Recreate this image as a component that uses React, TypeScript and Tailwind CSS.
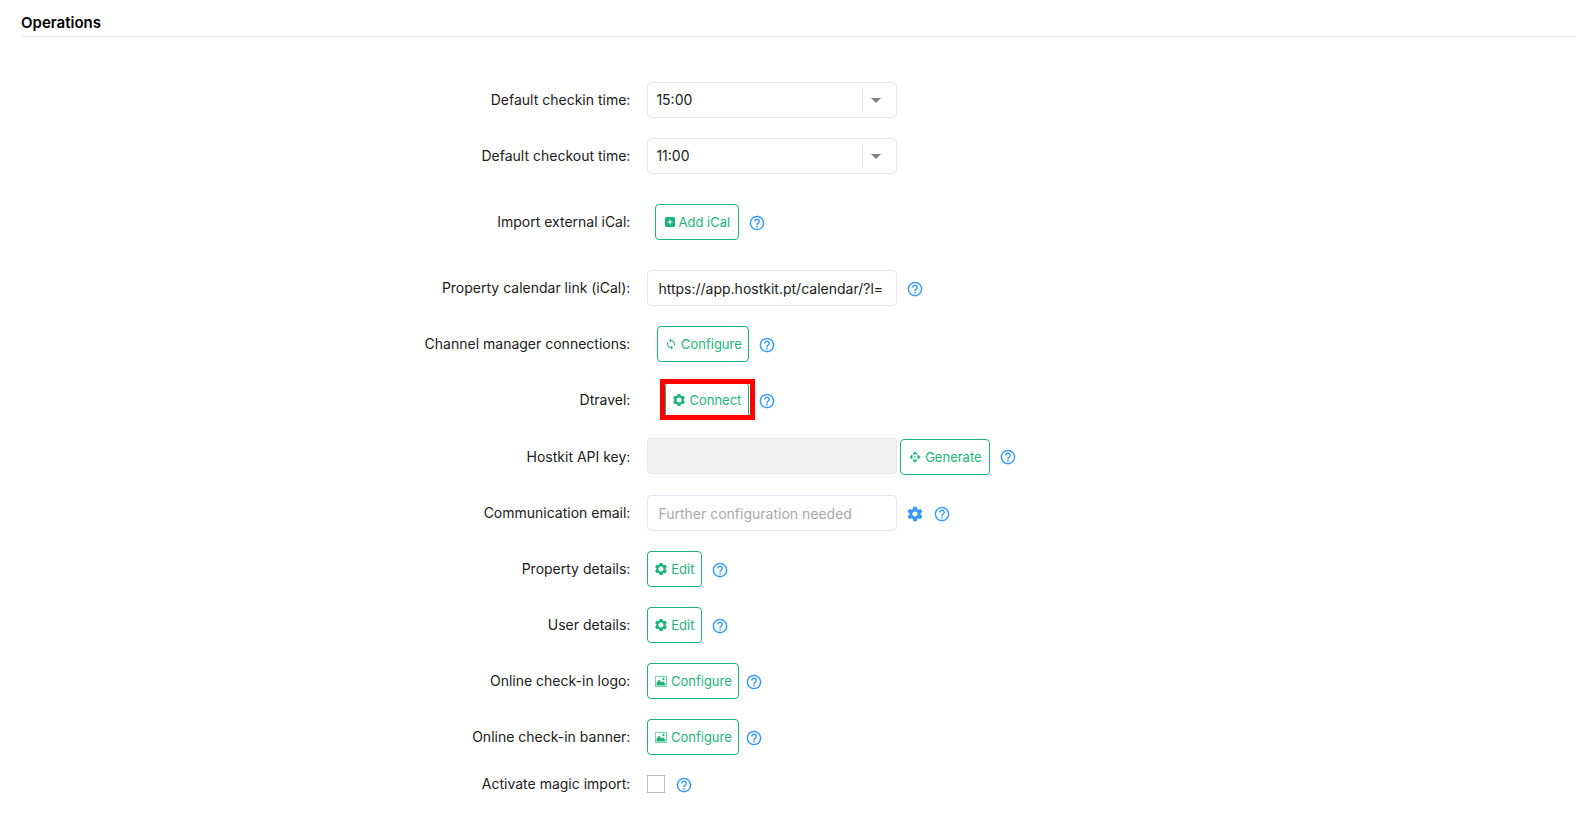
import { useId, type ReactNode } from "react";
import { IoMdHelpCircleOutline, IoMdSettings } from "react-icons/io";

function GearIcon() {
  return (
    <svg viewBox="0 0 12 12" className="size-3 shrink-0" fill="currentColor" aria-hidden="true">
      <path
        fillRule="evenodd"
        d="M4.6 0h2.8l.4 1.6 1.1.6 1.6-.5 1.4 2.4-1.2 1.2v1.4l1.2 1.2-1.4 2.4-1.6-.5-1.1.6-.4 1.6H4.6l-.4-1.6-1.1-.6-1.6.5L.1 7.9l1.2-1.2V5.3L.1 4.1l1.4-2.4 1.6.5 1.1-.6zM6 3.500a2.500 2.500 0 1 0 0 5 2.500 2.500 0 0 0 0-5z"
      />
    </svg>
  );
}

function AddIcon() {
  return (
    <svg viewBox="0 0 10 10" className="size-[10px] shrink-0" aria-hidden="true">
      <rect width="10" height="10" rx="1.5" fill="currentColor" />
      <path d="M5 2.500v5M2.500 5h5" stroke="#fff" strokeWidth="1" />
    </svg>
  );
}

function SyncIcon() {
  return (
    <svg viewBox="0 0 24 24" className="size-3 shrink-0" fill="currentColor" aria-hidden="true">
      <path d="M12 4V1L8 5l4 4V6c3.310 0 6 2.690 6 6 0 1.010-.25 1.970-.7 2.800l1.460 1.460A7.930 7.930 0 0 0 20 12c0-4.420-3.580-8-8-8zm0 14c-3.310 0-6-2.690-6-6 0-1.010.25-1.970.7-2.800L5.240 7.740A7.930 7.930 0 0 0 4 12c0 4.420 3.580 8 8 8v3l4-4-4-4v3z" />
    </svg>
  );
}

function ApiIcon() {
  return (
    <svg viewBox="0 0 24 24" className="size-3 shrink-0" fill="currentColor" aria-hidden="true">
      <path d="m14 12-2 2-2-2 2-2 2 2zm-2-6 2.120 2.120 2.500-2.500L12 1 7.380 5.620l2.500 2.500L12 6zm-6 6 2.120-2.120-2.500-2.500L1 12l4.620 4.620 2.500-2.500L6 12zm12 0-2.120 2.120 2.500 2.500L23 12l-4.620-4.620-2.500 2.500L18 12zm-6 6-2.120-2.120-2.500 2.500L12 23l4.620-4.620-2.500-2.500L12 18z" />
    </svg>
  );
}

function PictureIcon() {
  return (
    <svg viewBox="0 0 12 11" className="h-[11px] w-3 shrink-0" aria-hidden="true">
      <rect x=".5" y=".5" width="11" height="10" fill="none" stroke="currentColor" strokeOpacity=".6" />
      <path d="M1.500 9.500V7l2.500-3.500 2.500 3 1.500-1.200 2.500 2.700v1.500z" fill="currentColor" />
      <circle cx="8.5" cy="3" r="1.2" fill="currentColor" />
    </svg>
  );
}

function Help({ className = "ml-[9px]" }: { className?: string }) {
  return (
    <button type="button" aria-label="Help" className={`mt-px shrink-0 text-[#3699ff] ${className}`}>
      <IoMdHelpCircleOutline className="size-[18px]" />
    </button>
  );
}

function OutlineButton({
  icon,
  children,
  className,
}: {
  icon: ReactNode;
  children: ReactNode;
  className: string;
}) {
  return (
    <button
      type="button"
      className={`flex h-9 shrink-0 items-center justify-center gap-1 rounded border border-[#1bb57c] bg-white text-[13px] text-[#1bb57c] ${className}`}
    >
      {icon}
      {children}
    </button>
  );
}

function Row({
  label,
  htmlFor,
  className = "h-9",
  children,
}: {
  label: string;
  htmlFor?: string;
  className?: string;
  children: ReactNode;
}) {
  const labelClass = "mr-[17px] w-2/5 shrink-0 text-right";
  return (
    <div className={`flex items-center ${className}`}>
      {htmlFor ? (
        <label htmlFor={htmlFor} className={labelClass}>
          {label}
        </label>
      ) : (
        <span className={labelClass}>{label}</span>
      )}
      {children}
    </div>
  );
}

const fieldClass = "h-9 w-[250px] shrink-0 rounded border border-[#e4e6ef]";

function TimeSelect({ label, value }: { label: string; value: string }) {
  const id = useId();
  return (
    <Row label={label} htmlFor={id}>
      <div className="relative">
        <select id={id} defaultValue={value} className={`${fieldClass} appearance-none bg-white px-2`}>
          <option>{value}</option>
        </select>
        <span className="pointer-events-none absolute inset-y-[7px] right-0 flex w-[35px] items-center border-l border-[#e4e6ef] pl-2">
          <svg viewBox="0 0 10 5" className="h-[5px] w-[10px]" fill="#808080" aria-hidden="true">
            <path d="M0 0h10L5 5z" />
          </svg>
        </span>
      </div>
    </Row>
  );
}

export default function App() {
  return (
    <main className="bg-white pb-10 pt-[13px] font-['Inter','Open_Sans',sans-serif] text-sm text-[#212121]">
      <h1 className="ml-[21px] border-b border-[#e4e6ef] pb-[3px] text-[15px] font-semibold leading-5 text-black">
        Operations
      </h1>

      <form className="mt-[45px] flex flex-col gap-5">
        <TimeSelect label="Default checkin time:" value="15:00" />
        <TimeSelect label="Default checkout time:" value="11:00" />

        <Row label="Import external iCal:" className="my-[10px] h-9">
          <OutlineButton icon={<AddIcon />} className="ml-2 w-[84px]">
            Add iCal
          </OutlineButton>
          <Help />
        </Row>

        <Row label="Property calendar link (iCal):" htmlFor="calendar-link">
          <input
            id="calendar-link"
            type="text"
            defaultValue="https://app.hostkit.pt/calendar/?l="
            className={`${fieldClass} px-[10px]`}
          />
          <Help />
        </Row>

        <Row label="Channel manager connections:">
          <OutlineButton icon={<SyncIcon />} className="ml-[10px] w-[92px]">
            Configure
          </OutlineButton>
          <Help />
        </Row>

        <Row label="Dtravel:">
          <div className="relative ml-[18px]">
            <OutlineButton icon={<GearIcon />} className="w-[84px]">
              Connect
            </OutlineButton>
            <span className="pointer-events-none absolute -bottom-[2px] -left-[5px] -right-[6px] -top-[3px] border-[5px] border-[#fe0000]" />
          </div>
          <Help />
        </Row>

        <Row label="Hostkit API key:" htmlFor="api-key" className="h-[37px]">
          <input id="api-key" type="text" disabled className={`${fieldClass} self-start bg-[#f3f3f3] px-[10px]`} />
          <OutlineButton icon={<ApiIcon />} className="ml-[3px] w-[90px] self-end">
            Generate
          </OutlineButton>
          <Help />
        </Row>

        <Row label="Communication email:" htmlFor="email">
          <input
            id="email"
            type="text"
            placeholder="Further configuration needed"
            className={`${fieldClass} px-[10px] placeholder:text-[#a9a9a9]`}
          />
          <button type="button" aria-label="Email settings" className="ml-[9px] mt-px shrink-0 text-[#3699ff]">
            <IoMdSettings className="size-[18px]" />
          </button>
          <Help />
        </Row>

        <Row label="Property details:">
          <OutlineButton icon={<GearIcon />} className="w-[55px]">
            Edit
          </OutlineButton>
          <Help />
        </Row>

        <Row label="User details:">
          <OutlineButton icon={<GearIcon />} className="w-[55px]">
            Edit
          </OutlineButton>
          <Help />
        </Row>

        <Row label="Online check-in logo:">
          <OutlineButton icon={<PictureIcon />} className="w-[92px]">
            Configure
          </OutlineButton>
          <Help className="ml-[6px]" />
        </Row>

        <Row label="Online check-in banner:">
          <OutlineButton icon={<PictureIcon />} className="w-[92px]">
            Configure
          </OutlineButton>
          <Help className="ml-[6px]" />
        </Row>

        <Row label="Activate magic import:" htmlFor="magic-import" className="h-[18px]">
          <input
            id="magic-import"
            type="checkbox"
            className="size-[18px] shrink-0 appearance-none border border-[#bdbdbd] bg-white checked:bg-[#1bb57c]"
          />
          <Help className="ml-[10px]" />
        </Row>
      </form>
    </main>
  );
}
